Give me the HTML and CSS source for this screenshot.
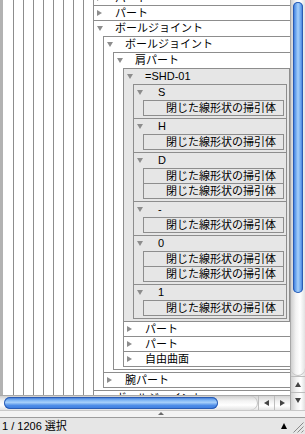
FILE: index.html
```html
<!DOCTYPE html>
<html lang="ja">
<head>
  <meta charset="UTF-8" />
  <title>ツリー</title>
  <link rel="stylesheet" href="styles.css">
</head>
<body>

  <div class="window">
    <div class="main">
      <div class="left">
        <div class="upper">
          <div class="strip"></div>
          <div class="view">
            <div class="tree">
              <div class="node"><div class="head"><span class="tri"></span>パート</div></div>
              <div class="node"><div class="head"><span class="tri"></span>パート</div></div>
              <div class="node">
                <div class="head"><span class="tri open"></span>ボールジョイント</div>
                <div class="kids">
                  <div class="node">
                    <div class="head"><span class="tri open"></span>ボールジョイント</div>
                    <div class="kids">
                      <div class="node">
                        <div class="head"><span class="tri open"></span>肩パート</div>
                        <div class="kids">
                          <!-- sweep groups -->
                          <div class="node gray">
                            <div class="head"><span class="tri open"></span>=SHD-01</div>
                            <div class="kids">
                              <div class="node">
                                <div class="head"><span class="tri open"></span><span class="tag">S</span></div>
                                <div class="kids">
                                  <div class="node"><div class="head plain">閉じた線形状の掃引体</div></div>
                                </div>
                              </div>
                              <div class="node">
                                <div class="head"><span class="tri open"></span><span class="tag">H</span></div>
                                <div class="kids">
                                  <div class="node"><div class="head plain">閉じた線形状の掃引体</div></div>
                                </div>
                              </div>
                              <div class="node">
                                <div class="head"><span class="tri open"></span><span class="tag">D</span></div>
                                <div class="kids">
                                  <div class="node"><div class="head plain">閉じた線形状の掃引体</div></div>
                                  <div class="node"><div class="head plain">閉じた線形状の掃引体</div></div>
                                </div>
                              </div>
                              <div class="node">
                                <div class="head"><span class="tri open"></span><span class="tag">-</span></div>
                                <div class="kids">
                                  <div class="node"><div class="head plain">閉じた線形状の掃引体</div></div>
                                </div>
                              </div>
                              <div class="node">
                                <div class="head"><span class="tri open"></span><span class="tag">0</span></div>
                                <div class="kids">
                                  <div class="node"><div class="head plain">閉じた線形状の掃引体</div></div>
                                  <div class="node"><div class="head plain">閉じた線形状の掃引体</div></div>
                                </div>
                              </div>
                              <div class="node">
                                <div class="head"><span class="tri open"></span><span class="tag">1</span></div>
                                <div class="kids">
                                  <div class="node"><div class="head plain">閉じた線形状の掃引体</div></div>
                                </div>
                              </div>
                            </div>
                          </div>
                          <div class="node"><div class="head"><span class="tri"></span>パート</div></div>
                          <div class="node"><div class="head"><span class="tri"></span>パート</div></div>
                          <div class="node"><div class="head"><span class="tri"></span>自由曲面</div></div>
                        </div>
                      </div>
                    </div>
                  </div>
                  <div class="node"><div class="head"><span class="tri"></span>腕パート</div></div>
                </div>
              </div>
              <div class="node"><div class="head"><span class="tri"></span>ボールジョイント</div></div>
            </div>
          </div>
        </div>
        <div class="hscroll">
          <div class="htrack"><div class="hthumb"></div></div>
          <div class="harrow"><span class="arr-left"></span></div>
          <div class="harrow"><span class="arr-right"></span></div>
        </div>
      </div>
      <div class="vscroll">
        <div class="vtrack"><div class="vthumb"></div></div>
        <div class="varrow"><span class="arr-up"></span></div>
        <div class="varrow"><span class="arr-down"></span></div>
      </div>
    </div>

    <div class="split"><span class="split-mark"></span></div>

    <div class="status">
      <span class="count">1 / 1206 選択</span>
      <span class="status-right">
        <span class="black-up"></span>
        <svg class="grip" width="11" height="11" viewBox="0 0 11 11">
          <path d="M10.5 0.5 L0.5 10.5 M10.5 4.5 L4.5 10.5 M10.5 8.5 L8.5 10.5" stroke="#8a8a8a" stroke-width="1" fill="none"/>
        </svg>
      </span>
    </div>
  </div>

</body>
</html>
```

FILE: styles.css
```css
body {
  margin: 0;
  font-family: "Liberation Sans", "Noto Sans CJK JP", sans-serif;
  font-size: 11px;
  color: #000;
}

.window {
  width: 305px;
  height: 434px;
  display: flex;
  flex-direction: column;
  overflow: hidden;
  background: #fff;
}

.main {
  display: flex;
  height: 410px;
}

.left {
  width: 290px;
  display: flex;
  flex-direction: column;
}

.upper {
  display: flex;
  height: 395px;
}

.strip {
  width: 3px;
  background: #b2b2b2;
}

/* ancestor lines to the left of the visible levels */
.view {
  width: 287px;
  overflow: hidden;
  background:
    repeating-linear-gradient(to right, transparent 0, transparent 9px, #8d8d8d 9px, #8d8d8d 10px) 1px 0 / 81px 100% no-repeat,
    #fff;
}

.tree {
  margin: -10px 0 0 90px;
  width: 197px;
}

.node {
  border: 1px solid #8d8d8d;
  border-right: none;
  background: #fff;
}

.node + .node {
  margin-top: -1px;
}

.head {
  display: flex;
  align-items: center;
  height: 14px;
  line-height: 14px;
  padding-left: 3px;
  white-space: nowrap;
}

.head.plain {
  padding-left: 22px;
}

.tri {
  width: 0;
  height: 0;
  border-style: solid;
  border-width: 3.5px 0 3.5px 5px;
  border-color: transparent transparent transparent #8d8d8d;
  margin-right: 13px;
}

.tri.open {
  border-width: 5px 3px 0 3px;
  border-color: #8d8d8d transparent transparent transparent;
  margin-right: 12px;
}

.tag {
  margin-left: 3px;
}

.kids {
  padding: 1px 0 2px 9px;
}

.gray,
.gray .node {
  background: #e6e6e6;
  border-right: 1px solid #8d8d8d;
}

.gray .kids {
  padding-right: 2px;
}

/* scroll bars */
.hscroll {
  display: flex;
  height: 15px;
  border-top: 1px solid #a8a8a8;
  box-sizing: border-box;
  background: linear-gradient(to bottom, #d4d4d4, #f2f2f2 40%, #fff 70%, #e4e4e4);
}

.htrack {
  width: 258px;
  border-radius: 0 7px 7px 0;
  background: linear-gradient(to bottom, #cfcfcf, #f3f3f3 35%, #fff 65%, #e2e2e2);
  box-shadow: inset -1px 0 0 #c4c4c4;
}

.hthumb {
  margin: 1px 0 0 4px;
  width: 214px;
  height: 12px;
  border-radius: 6px;
  background: linear-gradient(to bottom, #2e68cc 0, #7db3f3 25%, #a7d0fa 45%, #4f8ee8 70%, #3a79dc 100%);
  box-shadow: inset 0 0 0 1px #2a5cb4;
}

.harrow {
  width: 16px;
  display: flex;
  align-items: center;
  justify-content: center;
  border-left: 1px solid #bdbdbd;
  box-sizing: border-box;
}

.arr-left,
.arr-right,
.arr-up,
.arr-down {
  width: 0;
  height: 0;
  border-style: solid;
}

.arr-left {
  border-width: 3.5px 5px 3.5px 0;
  border-color: transparent #444 transparent transparent;
}

.arr-right {
  border-width: 3.5px 0 3.5px 5px;
  border-color: transparent transparent transparent #444;
}

.vscroll {
  width: 15px;
  height: 410px;
  display: flex;
  flex-direction: column;
  border-left: 1px solid #a8a8a8;
  box-sizing: border-box;
  background: linear-gradient(to right, #d2d2d2, #f2f2f2 40%, #fff 70%, #e0e0e0);
}

.vtrack {
  height: 376px;
  border-radius: 0 0 7px 7px;
  background: linear-gradient(to right, #cfcfcf, #f3f3f3 35%, #fff 65%, #e2e2e2);
  box-shadow: inset 0 -1px 0 #c4c4c4;
}

.vthumb {
  margin: 2px 2px 0 2px;
  height: 291px;
  border-radius: 6px;
  background: linear-gradient(to right, #2e68cc 0, #5f9cec 22%, #a7d0fa 50%, #6ea9ef 75%, #3470d4 100%);
  box-shadow: inset 0 0 0 1px #2a5cb4;
}

.varrow {
  height: 16px;
  display: flex;
  align-items: center;
  justify-content: center;
  border-top: 1px solid #bdbdbd;
  box-sizing: border-box;
}

.arr-up {
  border-width: 0 3.5px 5px 3.5px;
  border-color: transparent transparent #444 transparent;
}

.arr-down {
  border-width: 5px 3.5px 0 3.5px;
  border-color: #444 transparent transparent transparent;
}

/* splitter + status */
.split {
  height: 7px;
  background: #f3f3f3;
  border-top: 1px solid #c8c8c8;
  box-sizing: border-box;
  display: flex;
  justify-content: center;
  padding-left: 16px;
}

.split-mark {
  margin-top: 1px;
  width: 0;
  height: 0;
  border-style: solid;
  border-width: 0 3px 3px 3px;
  border-color: transparent transparent #6a6a6a transparent;
}

.status {
  height: 17px;
  border-top: 1px solid #9c9c9c;
  box-sizing: border-box;
  background: #e6e6e6;
  display: flex;
  align-items: center;
  justify-content: space-between;
  padding-left: 2px;
}

.count {
  line-height: 16px;
}

.status-right {
  display: flex;
  align-items: flex-end;
  gap: 6px;
  height: 16px;
  padding-right: 1px;
}

.black-up {
  margin-bottom: 5px;
  width: 0;
  height: 0;
  border-style: solid;
  border-width: 0 3.5px 6px 3.5px;
  border-color: transparent transparent #000 transparent;
}

.grip {
  display: block;
  margin-bottom: 1px;
}
```
